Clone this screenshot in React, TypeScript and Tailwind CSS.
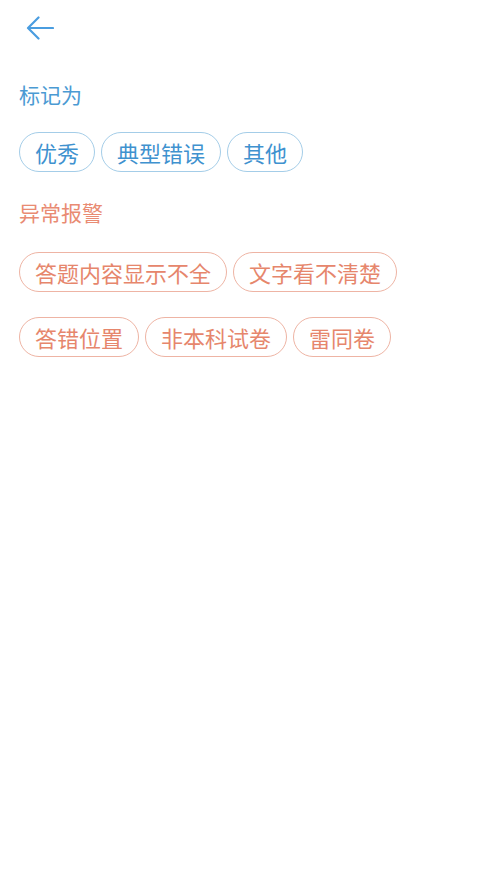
import React from "react";

const blueTags = ["优秀", "典型错误", "其他"];
const redTags = ["答题内容显示不全", "文字看不清楚", "答错位置", "非本科试卷", "雷同卷"];

export default function App() {
  return (
    <div
      className="w-[497px] min-h-[883px] bg-white px-[19px]"
      style={{ fontFamily: '"Noto Sans CJK SC", "Noto Sans", sans-serif' }}
    >
      <div className="h-[56px] flex items-center pl-[7px]">
        <svg width="28" height="24" viewBox="0 0 28 24" fill="none">
          <path
            d="M27 12H2.5M12.5 1.5L2 12l10.5 10.5"
            stroke="#4a9de0"
            strokeWidth="2.2"
            strokeLinecap="round"
            strokeLinejoin="round"
          />
        </svg>
      </div>
      <div className="mt-[24px] text-[21px] leading-[28px] text-[#4b9ad3]">标记为</div>
      <div className="mt-[24px] flex flex-wrap gap-x-[6px] gap-y-[25px]">
        {blueTags.map((t) => (
          <div
            key={t}
            className="h-[40px] px-[15px] flex items-center rounded-full border border-[#a4cde8] text-[22px] text-[#3f92cf]"
          >
            {t}
          </div>
        ))}
      </div>
      <div className="mt-[26px] text-[21px] leading-[28px] text-[#e98b73]">异常报警</div>
      <div className="mt-[26px] flex flex-wrap gap-x-[6px] gap-y-[25px]">
        {redTags.map((t) => (
          <div
            key={t}
            className="h-[40px] px-[15px] flex items-center rounded-full border border-[#eeb4a4] text-[22px] text-[#e6866c]"
          >
            {t}
          </div>
        ))}
      </div>
    </div>
  );
}
